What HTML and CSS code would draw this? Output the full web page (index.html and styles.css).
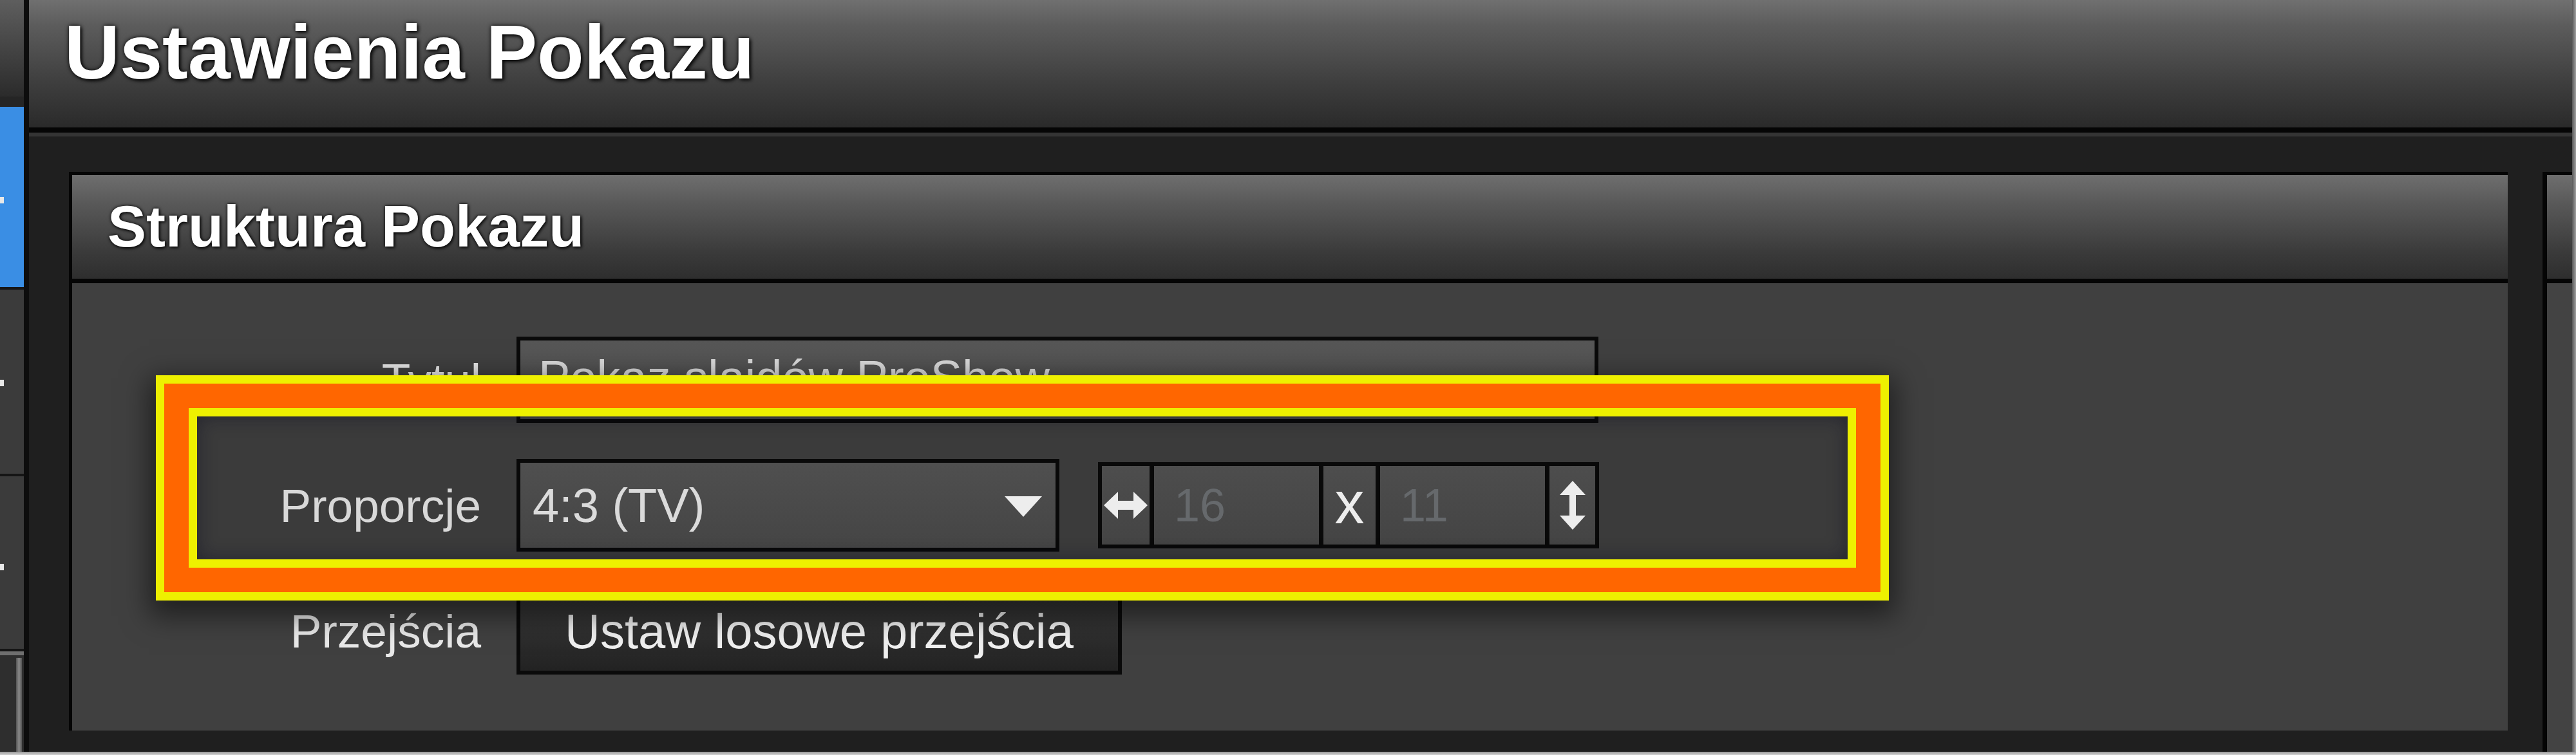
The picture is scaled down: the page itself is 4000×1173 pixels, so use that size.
FILE: index.html
```html
<!DOCTYPE html>
<html lang="pl">
<head>
<meta charset="utf-8">
<title>Ustawienia Pokazu</title>
<link rel="stylesheet" href="styles.css">
</head>
<body>
<div class="window">
  <div class="frame">
    <aside class="sidebar">
      <div class="sb-top"></div>
      <div class="sb-gap"></div>
      <div class="sb-blue"><span class="sb-dot dot-blue"></span></div>
      <div class="sb-item"><span class="sb-dot dot-1"></span></div>
      <div class="sb-item sb-item2"><span class="sb-dot dot-2"></span></div>
      <div class="sb-foot"><span class="sb-bar"></span></div>
    </aside>
    <div class="vline"></div>
    <main class="main">
      <header class="titlebar"><h1 class="title">Ustawienia Pokazu</h1></header>
      <div class="content">
        <section class="panel">
          <div class="panel-head"><h2 class="panel-title">Struktura Pokazu</h2></div>
          <div class="panel-body">
            <div class="form">
              <div class="label row-title">Tytuł</div>
              <div class="field">
                <div class="input title-input">Pokaz slajdów ProShow</div>
              </div>

              <div class="label row-aspect">Proporcje</div>
              <div class="field aspect-field">
                <div class="select">
                  <span class="select-text">4:3 (TV)</span>
                  <svg class="select-arrow" width="58" height="32" viewBox="0 0 58 32"><path d="M0 0 L58 0 L29 32 Z" fill="#ffffff"/></svg>
                </div>
                <div class="numgroup">
                  <div class="ncell icon-cell">
                    <svg width="68" height="42" viewBox="0 0 68 42"><path d="M0 21 L22 0 L22 14 L46 14 L46 0 L68 21 L46 42 L46 28 L22 28 L22 42 Z" fill="#ffffff"/></svg>
                  </div>
                  <div class="ncell num-cell">16</div>
                  <div class="ncell x-cell">x</div>
                  <div class="ncell num-cell">11</div>
                  <div class="ncell icon-cell vcell">
                    <svg width="44" height="76" viewBox="0 0 44 76"><path d="M22 0 L42 22 L27 22 L27 54 L42 54 L22 76 L2 54 L17 54 L17 22 L2 22 Z" fill="#ffffff"/></svg>
                  </div>
                </div>
              </div>

              <div class="label row-trans">Przejścia</div>
              <div class="field">
                <div class="btn">Ustaw losowe przejścia</div>
              </div>
            </div>
            <div class="highlight"></div>
          </div>
        </section>
        <section class="panel2">
          <div class="panel2-head"></div>
          <div class="panel2-body"></div>
        </section>
      </div>
    </main>
    <div class="redge"></div>
  </div>
  <div class="bottomline"></div>
</div>
</body>
</html>
```

FILE: styles.css
```css
* { box-sizing: border-box; }

html, body {
  margin: 0;
  padding: 0;
  background: #1e1e1e;
}

body {
  width: 4000px;
  height: 1173px;
  overflow: hidden;
  font-family: "Liberation Sans", Arial, sans-serif;
}

.window {
  width: 4000px;
  height: 1173px;
  display: flex;
  flex-direction: column;
}

.frame {
  flex: 1;
  display: flex;
  min-height: 0;
}

.bottomline {
  height: 5px;
  background: linear-gradient(#9a9a9a, #d2d2d2);
}

/* ---------- sidebar ---------- */
.sidebar {
  width: 37px;
  display: flex;
  flex-direction: column;
  background: #3a3a3a;
}

.sb-top {
  height: 150px;
  background: linear-gradient(#5e5e5e, #2b2b2b);
}

.sb-gap {
  height: 16px;
  background: #252525;
}

.sb-blue {
  height: 284px;
  background: #3a8ee4;
  position: relative;
  border-bottom: 4px solid #161616;
}

.sb-item {
  height: 290px;
  background: #3b3b3b;
  border-bottom: 4px solid #151515;
  position: relative;
}

.sb-item2 {
  height: 272px;
}

.sb-foot {
  flex: 1;
  background: #2e2e2e;
  border-top: 6px solid #6f6f6f;
  position: relative;
}

.sb-bar {
  position: absolute;
  left: 25px;
  top: 4px;
  bottom: 0;
  width: 9px;
  background: linear-gradient(90deg, #555, #8a8a8a, #555);
}

.sb-dot {
  position: absolute;
  left: 0;
  width: 6px;
  height: 10px;
  background: #e8e8e8;
}

.dot-blue { top: 140px; }
.dot-1 { top: 140px; }
.dot-2 { top: 136px; }

.vline {
  width: 8px;
  background: #0d0d0d;
}

.redge {
  width: 6px;
  background: linear-gradient(90deg, #5a5a5a, #a0a0a0);
}

/* ---------- main ---------- */
.main {
  flex: 1;
  display: flex;
  flex-direction: column;
  min-width: 0;
}

.titlebar {
  height: 206px;
  background: linear-gradient(#707070 0, #5c5c5c 20%, #3e3e3e 65%, #2a2a2a 100%);
  border-bottom: 8px solid #050505;
  padding: 22px 0 0 55px;
}

.title {
  margin: 0;
  font-size: 119px;
  line-height: 118px;
  font-weight: bold;
  color: #ffffff;
  text-shadow: 0 0 6px rgba(0,0,0,0.95), 3px 3px 5px rgba(0,0,0,0.7);
}

.content {
  flex: 1;
  display: flex;
  border-top: 6px solid #343434;
  background: #1f1f1f;
  padding: 55px 0 0 62px;
  gap: 54px;
}

/* ---------- panel ---------- */
.panel {
  flex: 1;
  display: flex;
  flex-direction: column;
  border-top: 5px solid #050505;
  border-left: 5px solid #050505;
  margin-bottom: 33px;
}

.panel-head {
  height: 168px;
  background: linear-gradient(#6e6e6e 0, #575757 30%, #3a3a3a 75%, #2e2e2e 100%);
  border-bottom: 7px solid #050505;
  padding: 35px 0 0 55px;
}

.panel-title {
  margin: 0;
  font-size: 90px;
  line-height: 90px;
  font-weight: bold;
  color: #ffffff;
  text-shadow: 0 0 5px rgba(0,0,0,0.95), 2px 2px 4px rgba(0,0,0,0.7);
}

.panel-body {
  flex: 1;
  position: relative;
  background: #404040;
  padding-top: 83px;
}

.panel2 {
  width: 46px;
  display: flex;
  flex-direction: column;
  border-top: 5px solid #050505;
  border-left: 7px solid #050505;
}

.panel2-head {
  height: 168px;
  background: linear-gradient(#6e6e6e 0, #575757 30%, #3a3a3a 75%, #2e2e2e 100%);
  border-bottom: 7px solid #050505;
}

.panel2-body {
  flex: 1;
  background: #434343;
}

/* ---------- form ---------- */
.form {
  display: grid;
  grid-template-columns: 635px auto;
  grid-template-rows: 134px 144px 135px;
  column-gap: 55px;
  row-gap: 56px;
  align-items: center;
}

.label {
  text-align: right;
  font-size: 73px;
  color: #e9e9e9;
}

.field {
  display: flex;
  align-items: center;
  height: 100%;
}

.input {
  height: 134px;
  width: 1680px;
  border: 6px solid #0a0a0a;
  background: linear-gradient(#575757, #4a4a4a);
  display: flex;
  align-items: center;
  padding-left: 28px;
  padding-bottom: 8px;
  font-size: 74px;
  color: #dcdcdc;
}

.aspect-field {
  gap: 60px;
}

.select {
  width: 843px;
  height: 144px;
  border: 6px solid #0a0a0a;
  background: linear-gradient(#555555, #4b4b4b);
  display: flex;
  align-items: center;
  justify-content: space-between;
  padding: 0 21px 0 19px;
}

.select-text {
  font-size: 74px;
  color: #ececec;
}

.select-arrow {
  margin-top: 4px;
}

.numgroup {
  height: 134px;
  display: flex;
  border: 6px solid #0a0a0a;
  background: #0a0a0a;
  gap: 7px;
}

.ncell {
  background: linear-gradient(#535353, #4a4a4a);
  display: flex;
  align-items: center;
}

.icon-cell {
  width: 74px;
  justify-content: center;
}

.vcell {
  width: 71px;
}

.num-cell {
  width: 256px;
  padding-left: 31px;
  font-size: 72px;
  color: #6e7275;
}

.x-cell {
  width: 81px;
  justify-content: center;
  font-size: 92px;
  color: #ffffff;
  padding-bottom: 8px;
}

.btn {
  width: 940px;
  height: 135px;
  border: 6px solid #0a0a0a;
  background: linear-gradient(#3d3d3d, #222222);
  display: flex;
  align-items: center;
  justify-content: center;
  font-size: 76px;
  color: #f0f0f0;
}

/* ---------- highlight overlay ---------- */
.highlight {
  position: absolute;
  left: 130px;
  top: 143px;
  width: 2691px;
  height: 350px;
  border: 13px solid #eef000;
  background: rgba(0,0,0,0.07);
  box-shadow:
    inset 0 0 0 38px #ff6600,
    inset 0 0 0 51px #eef000,
    inset 0 0 30px 51px rgba(10,10,30,0.45),
    0 14px 40px 10px rgba(0,0,0,0.5);
}
```
